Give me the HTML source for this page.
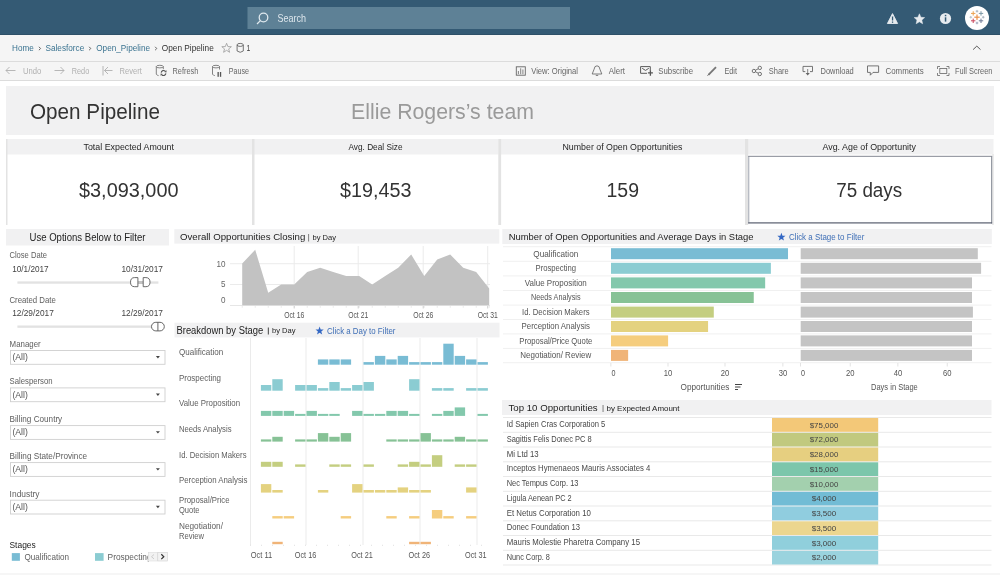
<!DOCTYPE html><html><head><meta charset="utf-8"><style>html,body{margin:0;padding:0;background:#fff;overflow:hidden}svg{display:block;will-change:transform}text{font-family:"Liberation Sans",sans-serif}</style></head><body>
<svg width="1000" height="575" viewBox="0 0 1000 575">
<rect x="0.00" y="0.00" width="1000.00" height="35.00" fill="#345a74" />
<rect x="0.00" y="34.00" width="1000.00" height="1.00" fill="#2e5068" />
<rect x="247.50" y="7.00" width="322.50" height="22.00" fill="#5e8196" />
<circle cx="263.5" cy="17.5" r="4.3" fill="none" stroke="#dfe8ee" stroke-width="1.3"/>
<line x1="260.4" y1="20.6" x2="257" y2="24" stroke="#dfe8ee" stroke-width="1.3"/>
<text x="277.50" y="21.60" font-size="10.43" textLength="28.50" lengthAdjust="spacingAndGlyphs" fill="#dde6ec" font-weight="normal" >Search</text>
<path d="M892.5 13.6 L897.6 23.5 L887.4 23.5 Z" fill="#e6ebef" stroke="#e6ebef" stroke-width="0.9" stroke-linejoin="round"/>
<rect x="891.9" y="16.5" width="1.3" height="4" fill="#345a74"/><rect x="891.9" y="21.5" width="1.3" height="1.3" fill="#345a74"/>
<polygon points="919.40,13.80 920.90,17.24 924.63,17.60 921.83,20.09 922.63,23.75 919.40,21.85 916.17,23.75 916.97,20.09 914.17,17.60 917.90,17.24" fill="#e6ebef" stroke="#e6ebef" stroke-width="0.5" stroke-linejoin="round"/>
<circle cx="945.5" cy="18.5" r="5.6" fill="#e6ebef"/><rect x="944.8" y="17.3" width="1.5" height="4.3" fill="#345a74"/><rect x="944.8" y="14.8" width="1.5" height="1.5" fill="#345a74"/>
<circle cx="977" cy="18" r="12" fill="#ffffff"/>
<rect x="974.30" y="16.60" width="5.40" height="1.20" fill="#e9914a"/><rect x="976.40" y="14.50" width="1.20" height="5.40" fill="#e9914a"/>
<rect x="971.00" y="12.90" width="4.40" height="1.00" fill="#eba24f"/><rect x="972.70" y="11.20" width="1.00" height="4.40" fill="#eba24f"/>
<rect x="978.80" y="12.90" width="4.40" height="1.00" fill="#7d97a6"/><rect x="980.50" y="11.20" width="1.00" height="4.40" fill="#7d97a6"/>
<rect x="971.00" y="20.30" width="4.40" height="1.00" fill="#c9455a"/><rect x="972.70" y="18.60" width="1.00" height="4.40" fill="#c9455a"/>
<rect x="978.80" y="20.30" width="4.40" height="1.00" fill="#6d7894"/><rect x="980.50" y="18.60" width="1.00" height="4.40" fill="#6d7894"/>
<rect x="975.70" y="10.75" width="2.60" height="0.90" fill="#a5b0ba"/><rect x="976.55" y="9.90" width="0.90" height="2.60" fill="#a5b0ba"/>
<rect x="975.70" y="22.55" width="2.60" height="0.90" fill="#939bb3"/><rect x="976.55" y="21.70" width="0.90" height="2.60" fill="#939bb3"/>
<rect x="969.50" y="16.75" width="2.60" height="0.90" fill="#b3bdc6"/><rect x="970.35" y="15.90" width="0.90" height="2.60" fill="#b3bdc6"/>
<rect x="981.90" y="16.75" width="2.60" height="0.90" fill="#a6afbb"/><rect x="982.75" y="15.90" width="0.90" height="2.60" fill="#a6afbb"/>
<rect x="0.00" y="35.00" width="1000.00" height="27.00" fill="#f5f5f5" />
<rect x="0.00" y="61.00" width="1000.00" height="1.00" fill="#dcdcdc" />
<text x="12.00" y="51.00" font-size="9.71" textLength="21.75" lengthAdjust="spacingAndGlyphs" fill="#3a7390" font-weight="normal" >Home</text>
<path d="M38.9 46.8 L40.6 48.5 L38.9 50.2" fill="none" stroke="#666" stroke-width="1"/>
<text x="45.50" y="51.00" font-size="9.71" textLength="38.75" lengthAdjust="spacingAndGlyphs" fill="#3a7390" font-weight="normal" >Salesforce</text>
<path d="M89.1 46.8 L90.8 48.5 L89.1 50.2" fill="none" stroke="#666" stroke-width="1"/>
<text x="96.25" y="51.00" font-size="9.71" textLength="53.75" lengthAdjust="spacingAndGlyphs" fill="#3a7390" font-weight="normal" >Open_Pipeline</text>
<path d="M155.1 46.8 L156.8 48.5 L155.1 50.2" fill="none" stroke="#666" stroke-width="1"/>
<text x="161.75" y="51.00" font-size="9.71" textLength="52.00" lengthAdjust="spacingAndGlyphs" fill="#333" font-weight="normal" >Open Pipeline</text>
<path d="M226.6 43.3 L227.9 46.6 L231.4 46.7 L228.7 48.9 L229.6 52.3 L226.6 50.3 L223.6 52.3 L224.5 48.9 L221.8 46.7 L225.3 46.6 Z" fill="none" stroke="#9a9a9a" stroke-width="0.8"/>
<ellipse cx="240.2" cy="44.9" rx="3.1" ry="1.5" fill="none" stroke="#666" stroke-width="0.9"/><path d="M237.1 44.9 V51 Q240.2 53.6 243.3 51 V44.9" fill="none" stroke="#666" stroke-width="0.9"/>
<text x="246.40" y="51.20" font-size="8.41" textLength="3.80" lengthAdjust="spacingAndGlyphs" fill="#444" font-weight="normal" >1</text>
<path d="M973.1 49.6 L976.8 46.1 L980.5 49.6" fill="none" stroke="#5a5a5a" stroke-width="1"/>
<rect x="0.00" y="62.00" width="1000.00" height="18.00" fill="#f5f5f5" />
<rect x="0.00" y="80.00" width="1000.00" height="1.00" fill="#dcdcdc" />
<path d="M15.5 70.5 H6 M9.5 67 L6 70.5 L9.5 74" fill="none" stroke="#b0b0b0" stroke-width="0.9"/>
<text x="23.00" y="74.30" font-size="9.86" textLength="18.25" lengthAdjust="spacingAndGlyphs" fill="#b0b0b0" font-weight="normal" >Undo</text>
<path d="M54.5 70.5 H64 M60.5 67 L64 70.5 L60.5 74" fill="none" stroke="#b0b0b0" stroke-width="0.9"/>
<text x="71.75" y="74.30" font-size="9.86" textLength="17.50" lengthAdjust="spacingAndGlyphs" fill="#b0b0b0" font-weight="normal" >Redo</text>
<path d="M103 66 V75.5 M112.5 70.5 H104.5 M108 67 L104.5 70.5 L108 74" fill="none" stroke="#b0b0b0" stroke-width="0.9"/>
<text x="119.50" y="74.30" font-size="9.86" textLength="22.25" lengthAdjust="spacingAndGlyphs" fill="#b0b0b0" font-weight="normal" >Revert</text>
<ellipse cx="159.8" cy="66.6" rx="3.5" ry="1.3" fill="none" stroke="#666" stroke-width="0.8"/><path d="M156.3 66.6 V74.2 Q157 75.4 158.6 75.6 M163.3 66.6 V69.2" fill="none" stroke="#666" stroke-width="0.8"/>
<path d="M161.2 72.6 A2.4 2.4 0 0 1 165.3 71.2 M165.9 73.4 A2.4 2.4 0 0 1 161.8 74.8" fill="none" stroke="#555" stroke-width="1.1"/><path d="M166.6 70.2 L166.4 72.6 L164.2 71.9 Z M160.5 75.8 L160.7 73.4 L162.9 74.1 Z" fill="#555"/>
<text x="172.50" y="74.30" font-size="9.86" textLength="25.75" lengthAdjust="spacingAndGlyphs" fill="#666" font-weight="normal" >Refresh</text>
<ellipse cx="216" cy="66.6" rx="3.5" ry="1.3" fill="none" stroke="#666" stroke-width="0.8"/><path d="M212.5 66.6 V74.2 Q213.2 75.4 214.8 75.6 M219.5 66.6 V69.5" fill="none" stroke="#666" stroke-width="0.8"/><rect x="217.5" y="72" width="1.3" height="4.8" fill="#555"/><rect x="219.9" y="72" width="1.3" height="4.8" fill="#555"/>
<text x="228.75" y="74.30" font-size="9.86" textLength="20.25" lengthAdjust="spacingAndGlyphs" fill="#666" font-weight="normal" >Pause</text>
<rect x="516.3" y="66.8" width="9" height="8.4" fill="none" stroke="#666" stroke-width="0.9"/><path d="M518.4 74.2 V71 M520.7 74.2 V68.3 M522.9 74.2 V69.5" stroke="#666" stroke-width="0.8"/>
<text x="531.25" y="74.30" font-size="9.86" textLength="46.75" lengthAdjust="spacingAndGlyphs" fill="#666" font-weight="normal" >View: Original</text>
<path d="M597 65.8 Q599.6 65.8 599.9 69.2 L601.8 74 H592.2 L594.1 69.2 Q594.4 65.8 597 65.8 Z M595.8 75.4 H598.2" fill="none" stroke="#666" stroke-width="0.85"/>
<text x="608.75" y="74.30" font-size="9.86" textLength="16.25" lengthAdjust="spacingAndGlyphs" fill="#666" font-weight="normal" >Alert</text>
<path d="M647 73.3 H640.6 V66.6 H650.3 V70.5 M642.2 68.3 L645.5 70.4 L648.8 68.3" fill="none" stroke="#5a5a5a" stroke-width="1"/><path d="M650.4 70.3 V75.8 M647.9 72.9 H652.9" stroke="#555" stroke-width="1.3"/>
<text x="658.25" y="74.30" font-size="9.86" textLength="34.75" lengthAdjust="spacingAndGlyphs" fill="#666" font-weight="normal" >Subscribe</text>
<path d="M708.4 74.8 L716 67.2" stroke="#777" stroke-width="1.9"/><path d="M707.6 75.6 L708.6 74.6" stroke="#555" stroke-width="1"/>
<text x="724.50" y="74.30" font-size="9.86" textLength="12.50" lengthAdjust="spacingAndGlyphs" fill="#666" font-weight="normal" >Edit</text>
<circle cx="753.9" cy="71" r="1.7" fill="none" stroke="#666" stroke-width="0.9"/><circle cx="759.8" cy="67.9" r="1.7" fill="none" stroke="#666" stroke-width="0.9"/><circle cx="759.8" cy="74" r="1.7" fill="none" stroke="#666" stroke-width="0.9"/><path d="M755.5 70.2 L758.2 68.8 M755.5 71.8 L758.2 73.2" stroke="#666" stroke-width="0.9"/>
<text x="768.75" y="74.30" font-size="9.86" textLength="20.00" lengthAdjust="spacingAndGlyphs" fill="#666" font-weight="normal" >Share</text>
<path d="M805.3 71.6 H803 V66.4 H812.5 V71.6 H810" fill="none" stroke="#666" stroke-width="0.9"/><path d="M807.7 69 V73.5" stroke="#666" stroke-width="0.8"/><path d="M805.6 73 H809.8 L807.7 75.6 Z" fill="#666"/>
<text x="820.50" y="74.30" font-size="9.86" textLength="33.25" lengthAdjust="spacingAndGlyphs" fill="#666" font-weight="normal" >Download</text>
<path d="M867.5 65.9 H878.6 V72.4 H873 L870.3 75.2 V72.4 H867.5 Z" fill="none" stroke="#666" stroke-width="0.9"/>
<text x="885.50" y="74.30" font-size="9.86" textLength="38.25" lengthAdjust="spacingAndGlyphs" fill="#666" font-weight="normal" >Comments</text>
<path d="M937.5 69 V66.5 H940 M946.5 66.5 H949 V69 M949 73 V75.5 H946.5 M940 75.5 H937.5 V73" fill="none" stroke="#666" stroke-width="0.8"/><rect x="939.8" y="68.5" width="7" height="5" fill="none" stroke="#666" stroke-width="0.8"/>
<text x="955.00" y="74.30" font-size="9.86" textLength="37.50" lengthAdjust="spacingAndGlyphs" fill="#666" font-weight="normal" >Full Screen</text>
<rect x="6.00" y="86.00" width="988.00" height="49.00" fill="#f1f1f2" />
<text x="30.00" y="119.00" font-size="21.16" textLength="130.00" lengthAdjust="spacingAndGlyphs" fill="#333" font-weight="normal" >Open Pipeline</text>
<text x="351.00" y="119.00" font-size="21.16" textLength="183.00" lengthAdjust="spacingAndGlyphs" fill="#9a9a9a" font-weight="normal" >Ellie Rogers’s team</text>
<rect x="6.00" y="139.00" width="246.50" height="15.50" fill="#f1f1f2" />
<rect x="253.50" y="139.00" width="245.00" height="15.50" fill="#f1f1f2" />
<rect x="500.50" y="139.00" width="244.50" height="15.50" fill="#f1f1f2" />
<rect x="748.00" y="139.00" width="245.50" height="15.50" fill="#f1f1f2" />
<rect x="6.00" y="139.00" width="1.50" height="86.00" fill="#e3e3e3" />
<rect x="252.00" y="139.00" width="2.50" height="86.00" fill="#e3e3e3" />
<rect x="498.30" y="139.00" width="2.80" height="86.00" fill="#e3e3e3" />
<rect x="745.00" y="139.00" width="3.20" height="86.00" fill="#e3e3e3" />
<text x="83.50" y="149.90" font-size="9.42" textLength="90.50" lengthAdjust="spacingAndGlyphs" fill="#262626" font-weight="normal" >Total Expected Amount</text>
<text x="348.50" y="149.90" font-size="9.42" textLength="54.00" lengthAdjust="spacingAndGlyphs" fill="#262626" font-weight="normal" >Avg. Deal Size</text>
<text x="562.50" y="149.90" font-size="9.42" textLength="120.00" lengthAdjust="spacingAndGlyphs" fill="#262626" font-weight="normal" >Number of Open Opportunities</text>
<text x="822.50" y="149.90" font-size="9.42" textLength="93.50" lengthAdjust="spacingAndGlyphs" fill="#262626" font-weight="normal" >Avg. Age of Opportunity</text>
<text x="79.00" y="197.20" font-size="19.57" textLength="99.50" lengthAdjust="spacingAndGlyphs" fill="#333" font-weight="normal" >$3,093,000</text>
<text x="340.00" y="197.20" font-size="19.57" textLength="71.50" lengthAdjust="spacingAndGlyphs" fill="#333" font-weight="normal" >$19,453</text>
<text x="606.50" y="197.20" font-size="19.57" textLength="32.50" lengthAdjust="spacingAndGlyphs" fill="#333" font-weight="normal" >159</text>
<text x="836.20" y="197.20" font-size="19.57" textLength="66.00" lengthAdjust="spacingAndGlyphs" fill="#333" font-weight="normal" >75 days</text>
<rect x="992.00" y="154.00" width="2.00" height="71.00" fill="#ececec" />
<rect x="748.20" y="156.00" width="1.10" height="67.50" fill="#a9adb7" />
<rect x="748.20" y="155.80" width="243.90" height="1.10" fill="#8f939d" />
<rect x="991.10" y="156.00" width="1.10" height="67.50" fill="#8a8f9a" />
<rect x="748.20" y="222.30" width="243.90" height="1.20" fill="#595e6e" />
<rect x="6.00" y="229.00" width="163.00" height="16.50" fill="#f1f1f2" />
<text x="29.50" y="241.30" font-size="10.14" textLength="115.90" lengthAdjust="spacingAndGlyphs" fill="#222" font-weight="normal" >Use Options Below to Filter</text>
<text x="9.40" y="258.10" font-size="8.55" textLength="37.60" lengthAdjust="spacingAndGlyphs" fill="#606060" font-weight="normal" >Close Date</text>
<text x="12.20" y="272.00" font-size="8.55" textLength="36.50" lengthAdjust="spacingAndGlyphs" fill="#444" font-weight="normal" >10/1/2017</text>
<text x="121.40" y="272.00" font-size="8.55" textLength="41.60" lengthAdjust="spacingAndGlyphs" fill="#444" font-weight="normal" >10/31/2017</text>
<rect x="17.40" y="281.40" width="141.00" height="2.30" fill="#e2e2e2" />
<rect x="137.50" y="281.00" width="6.00" height="3.00" fill="#c4c4c4" />
<path d="M137.9 277.6 H134.6 Q130.5 277.6 130.5 282.2 Q130.5 286.7 134.6 286.7 H137.9 Z" fill="#fff" stroke="#5a5a5a" stroke-width="0.9"/>
<path d="M143.2 277.6 H145.9 Q150.0 277.6 150.0 282.2 Q150.0 286.7 145.9 286.7 H143.2 Z" fill="#fff" stroke="#5a5a5a" stroke-width="0.9"/>
<text x="9.40" y="302.50" font-size="8.55" textLength="46.50" lengthAdjust="spacingAndGlyphs" fill="#606060" font-weight="normal" >Created Date</text>
<text x="12.20" y="316.30" font-size="8.55" textLength="41.60" lengthAdjust="spacingAndGlyphs" fill="#444" font-weight="normal" >12/29/2017</text>
<text x="121.40" y="316.30" font-size="8.55" textLength="41.60" lengthAdjust="spacingAndGlyphs" fill="#444" font-weight="normal" >12/29/2017</text>
<rect x="17.40" y="325.50" width="141.00" height="2.30" fill="#e2e2e2" />
<rect x="151.5" y="322.3" width="12.8" height="8.6" rx="4.3" fill="#fff" stroke="#555" stroke-width="0.9"/><path d="M157.9 322.3 V330.9" stroke="#555" stroke-width="0.9"/>
<text x="9.60" y="346.90" font-size="8.55" textLength="31.10" lengthAdjust="spacingAndGlyphs" fill="#606060" font-weight="normal" >Manager</text>
<rect x="10.5" y="350.50" width="154.5" height="13.8" fill="#fff" stroke="#cfcfcf" stroke-width="0.9"/>
<text x="12.40" y="360.30" font-size="8.55" textLength="15.40" lengthAdjust="spacingAndGlyphs" fill="#555" font-weight="normal" >(All)</text>
<path d="M155.9 356.10 H159.9 L157.9 358.50 Z" fill="#444"/>
<text x="9.60" y="384.30" font-size="8.55" textLength="43.00" lengthAdjust="spacingAndGlyphs" fill="#606060" font-weight="normal" >Salesperson</text>
<rect x="10.5" y="387.90" width="154.5" height="13.8" fill="#fff" stroke="#cfcfcf" stroke-width="0.9"/>
<text x="12.40" y="397.70" font-size="8.55" textLength="15.40" lengthAdjust="spacingAndGlyphs" fill="#555" font-weight="normal" >(All)</text>
<path d="M155.9 393.50 H159.9 L157.9 395.90 Z" fill="#444"/>
<text x="9.60" y="422.00" font-size="8.55" textLength="52.60" lengthAdjust="spacingAndGlyphs" fill="#606060" font-weight="normal" >Billing Country</text>
<rect x="10.5" y="425.60" width="154.5" height="13.8" fill="#fff" stroke="#cfcfcf" stroke-width="0.9"/>
<text x="12.40" y="435.40" font-size="8.55" textLength="15.40" lengthAdjust="spacingAndGlyphs" fill="#555" font-weight="normal" >(All)</text>
<path d="M155.9 431.20 H159.9 L157.9 433.60 Z" fill="#444"/>
<text x="9.60" y="459.00" font-size="8.55" textLength="77.50" lengthAdjust="spacingAndGlyphs" fill="#606060" font-weight="normal" >Billing State/Province</text>
<rect x="10.5" y="462.60" width="154.5" height="13.8" fill="#fff" stroke="#cfcfcf" stroke-width="0.9"/>
<text x="12.40" y="472.40" font-size="8.55" textLength="15.40" lengthAdjust="spacingAndGlyphs" fill="#555" font-weight="normal" >(All)</text>
<path d="M155.9 468.20 H159.9 L157.9 470.60 Z" fill="#444"/>
<text x="9.60" y="496.60" font-size="8.55" textLength="30.00" lengthAdjust="spacingAndGlyphs" fill="#606060" font-weight="normal" >Industry</text>
<rect x="10.5" y="500.20" width="154.5" height="13.8" fill="#fff" stroke="#cfcfcf" stroke-width="0.9"/>
<text x="12.40" y="510.00" font-size="8.55" textLength="15.40" lengthAdjust="spacingAndGlyphs" fill="#555" font-weight="normal" >(All)</text>
<path d="M155.9 505.80 H159.9 L157.9 508.20 Z" fill="#444"/>
<text x="9.50" y="547.90" font-size="9.86" textLength="26.20" lengthAdjust="spacingAndGlyphs" fill="#222" font-weight="normal" >Stages</text>
<rect x="11.80" y="553.10" width="8.10" height="7.70" fill="#79bcd4" />
<text x="24.40" y="559.90" font-size="8.55" textLength="44.60" lengthAdjust="spacingAndGlyphs" fill="#606060" font-weight="normal" >Qualification</text>
<rect x="95.00" y="553.10" width="8.60" height="7.70" fill="#8bccd2" />
<svg x="107.6" y="545" width="40.5" height="20" overflow="hidden">
<text x="0.00" y="14.90" font-size="8.55" textLength="44.00" lengthAdjust="spacingAndGlyphs" fill="#606060" font-weight="normal" >Prospecting</text>
</svg>
<rect x="148.3" y="552.4" width="9" height="8.6" fill="#f2f2f2" stroke="#dcdcdc" stroke-width="0.6"/><rect x="157.8" y="552.4" width="9.5" height="8.6" fill="#f2f2f2" stroke="#cfcfcf" stroke-width="0.6"/>
<path d="M154 554.5 L151.5 556.7 L154 558.9" fill="none" stroke="#c8c8c8" stroke-width="0.9"/><path d="M161.3 554.3 L163.8 556.7 L161.3 559.1" fill="none" stroke="#333" stroke-width="1.2"/>
<rect x="174.30" y="229.20" width="325.00" height="14.40" fill="#f1f1f2" />
<text x="180.00" y="240.10" font-size="9.57" textLength="125.30" lengthAdjust="spacingAndGlyphs" fill="#222" font-weight="normal" >Overall Opportunities Closing</text>
<rect x="308.00" y="234.00" width="1.10" height="7.50" fill="#8a8a8a" />
<text x="312.50" y="239.70" font-size="7.54" textLength="23.50" lengthAdjust="spacingAndGlyphs" fill="#222" font-weight="normal" >by Day</text>
<rect x="230.00" y="263.20" width="260.00" height="1.00" fill="#ebebeb" />
<rect x="230.00" y="284.00" width="260.00" height="1.00" fill="#ebebeb" />
<rect x="230.00" y="305.00" width="260.00" height="1.00" fill="#e6e6e6" />
<rect x="293.70" y="246.00" width="1.00" height="59.00" fill="#ebebeb" />
<rect x="357.70" y="246.00" width="1.00" height="59.00" fill="#ebebeb" />
<rect x="422.70" y="246.00" width="1.00" height="59.00" fill="#ebebeb" />
<rect x="487.20" y="246.00" width="1.00" height="59.00" fill="#ebebeb" />
<polygon points="242.20,305.3 242.20,263.60 255.20,249.84 268.20,292.79 281.20,284.45 294.20,284.45 307.20,271.94 320.20,267.77 333.20,271.94 346.20,276.11 359.20,276.11 372.20,284.45 385.20,276.11 398.20,267.77 411.20,254.43 424.20,276.11 437.20,259.43 450.20,254.43 463.20,267.77 476.20,271.94 489.20,288.62 489.20,305.3" fill="#c2c2c2"/>
<text x="216.50" y="266.60" font-size="8.55" textLength="9.00" lengthAdjust="spacingAndGlyphs" fill="#666" font-weight="normal" >10</text>
<text x="221.00" y="287.40" font-size="8.55" textLength="4.50" lengthAdjust="spacingAndGlyphs" fill="#666" font-weight="normal" >5</text>
<text x="221.00" y="303.40" font-size="8.55" textLength="4.50" lengthAdjust="spacingAndGlyphs" fill="#666" font-weight="normal" >0</text>
<rect x="241.80" y="306.00" width="0.80" height="1.80" fill="#e6e6e6" />
<rect x="254.80" y="306.00" width="0.80" height="1.80" fill="#e6e6e6" />
<rect x="267.80" y="306.00" width="0.80" height="1.80" fill="#e6e6e6" />
<rect x="280.80" y="306.00" width="0.80" height="1.80" fill="#e6e6e6" />
<rect x="293.80" y="306.00" width="0.80" height="1.80" fill="#e6e6e6" />
<rect x="306.80" y="306.00" width="0.80" height="1.80" fill="#e6e6e6" />
<rect x="319.80" y="306.00" width="0.80" height="1.80" fill="#e6e6e6" />
<rect x="332.80" y="306.00" width="0.80" height="1.80" fill="#e6e6e6" />
<rect x="345.80" y="306.00" width="0.80" height="1.80" fill="#e6e6e6" />
<rect x="358.80" y="306.00" width="0.80" height="1.80" fill="#e6e6e6" />
<rect x="371.80" y="306.00" width="0.80" height="1.80" fill="#e6e6e6" />
<rect x="384.80" y="306.00" width="0.80" height="1.80" fill="#e6e6e6" />
<rect x="397.80" y="306.00" width="0.80" height="1.80" fill="#e6e6e6" />
<rect x="410.80" y="306.00" width="0.80" height="1.80" fill="#e6e6e6" />
<rect x="423.80" y="306.00" width="0.80" height="1.80" fill="#e6e6e6" />
<rect x="436.80" y="306.00" width="0.80" height="1.80" fill="#e6e6e6" />
<rect x="449.80" y="306.00" width="0.80" height="1.80" fill="#e6e6e6" />
<rect x="462.80" y="306.00" width="0.80" height="1.80" fill="#e6e6e6" />
<rect x="475.80" y="306.00" width="0.80" height="1.80" fill="#e6e6e6" />
<rect x="488.80" y="306.00" width="0.80" height="1.80" fill="#e6e6e6" />
<rect x="293.70" y="306.00" width="1.00" height="2.50" fill="#d0d0d0" />
<text x="284.20" y="317.80" font-size="8.41" textLength="20.00" lengthAdjust="spacingAndGlyphs" fill="#555" font-weight="normal" >Oct 16</text>
<rect x="357.70" y="306.00" width="1.00" height="2.50" fill="#d0d0d0" />
<text x="348.20" y="317.80" font-size="8.41" textLength="20.00" lengthAdjust="spacingAndGlyphs" fill="#555" font-weight="normal" >Oct 21</text>
<rect x="422.70" y="306.00" width="1.00" height="2.50" fill="#d0d0d0" />
<text x="413.20" y="317.80" font-size="8.41" textLength="20.00" lengthAdjust="spacingAndGlyphs" fill="#555" font-weight="normal" >Oct 26</text>
<rect x="487.20" y="306.00" width="1.00" height="2.50" fill="#d0d0d0" />
<text x="477.70" y="317.80" font-size="8.41" textLength="20.00" lengthAdjust="spacingAndGlyphs" fill="#555" font-weight="normal" >Oct 31</text>
<rect x="174.50" y="322.70" width="325.00" height="14.70" fill="#f1f1f2" />
<text x="176.50" y="333.80" font-size="10.00" textLength="86.70" lengthAdjust="spacingAndGlyphs" fill="#222" font-weight="normal" >Breakdown by Stage</text>
<rect x="267.80" y="327.50" width="1.10" height="7.00" fill="#555" />
<text x="272.00" y="333.20" font-size="7.39" textLength="23.50" lengthAdjust="spacingAndGlyphs" fill="#222" font-weight="normal" >by Day</text>
<path d="M319.6 326.6 L320.7 329.5 L323.7 329.6 L321.3 331.5 L322.2 334.4 L319.6 332.7 L317 334.4 L317.9 331.5 L315.5 329.6 L318.5 329.5 Z" fill="#3468c4"/>
<text x="327.00" y="333.60" font-size="9.13" textLength="68.40" lengthAdjust="spacingAndGlyphs" fill="#3f6fb6" font-weight="normal" >Click a Day to Filter</text>
<rect x="250.00" y="338.00" width="1.00" height="207.00" fill="#ebebeb" />
<rect x="305.50" y="338.00" width="1.00" height="207.00" fill="#ebebeb" />
<rect x="362.50" y="338.00" width="1.00" height="207.00" fill="#ebebeb" />
<rect x="419.50" y="338.00" width="1.00" height="207.00" fill="#ebebeb" />
<rect x="476.50" y="338.00" width="1.00" height="207.00" fill="#ebebeb" />
<line x1="250" y1="545.3" x2="490" y2="545.3" stroke="#d8d8d8" stroke-width="0.8" stroke-dasharray="1 10"/>
<rect x="317.90" y="359.40" width="10.40" height="5.30" fill="#79bcd4" />
<rect x="329.30" y="359.40" width="10.40" height="5.30" fill="#79bcd4" />
<rect x="340.70" y="359.40" width="10.40" height="5.30" fill="#79bcd4" />
<rect x="363.50" y="362.10" width="10.40" height="2.60" fill="#79bcd4" />
<rect x="374.90" y="355.90" width="10.40" height="8.80" fill="#79bcd4" />
<rect x="386.30" y="359.40" width="10.40" height="5.30" fill="#79bcd4" />
<rect x="397.70" y="355.90" width="10.40" height="8.80" fill="#79bcd4" />
<rect x="409.10" y="362.10" width="10.40" height="2.60" fill="#79bcd4" />
<rect x="420.50" y="362.10" width="10.40" height="2.60" fill="#79bcd4" />
<rect x="431.90" y="362.10" width="10.40" height="2.60" fill="#79bcd4" />
<rect x="443.30" y="343.70" width="10.40" height="21.00" fill="#79bcd4" />
<rect x="454.70" y="355.90" width="10.40" height="8.80" fill="#79bcd4" />
<rect x="466.10" y="359.40" width="10.40" height="5.30" fill="#79bcd4" />
<rect x="477.50" y="362.10" width="10.40" height="2.60" fill="#79bcd4" />
<rect x="260.90" y="385.00" width="10.40" height="5.70" fill="#8bccd2" />
<rect x="272.30" y="379.20" width="10.40" height="11.50" fill="#8bccd2" />
<rect x="295.10" y="385.00" width="10.40" height="5.70" fill="#8bccd2" />
<rect x="306.50" y="385.00" width="10.40" height="5.70" fill="#8bccd2" />
<rect x="317.90" y="388.10" width="10.40" height="2.60" fill="#8bccd2" />
<rect x="329.30" y="382.00" width="10.40" height="8.70" fill="#8bccd2" />
<rect x="340.70" y="388.10" width="10.40" height="2.60" fill="#8bccd2" />
<rect x="352.10" y="385.00" width="10.40" height="5.70" fill="#8bccd2" />
<rect x="363.50" y="382.00" width="10.40" height="8.70" fill="#8bccd2" />
<rect x="409.10" y="379.20" width="10.40" height="11.50" fill="#8bccd2" />
<rect x="431.90" y="388.10" width="10.40" height="2.60" fill="#8bccd2" />
<rect x="443.30" y="388.10" width="10.40" height="2.60" fill="#8bccd2" />
<rect x="466.10" y="388.10" width="10.40" height="2.60" fill="#8bccd2" />
<rect x="477.50" y="388.10" width="10.40" height="2.60" fill="#8bccd2" />
<rect x="260.90" y="410.90" width="10.40" height="5.00" fill="#83c8ac" />
<rect x="272.30" y="410.90" width="10.40" height="5.00" fill="#83c8ac" />
<rect x="283.70" y="410.90" width="10.40" height="5.00" fill="#83c8ac" />
<rect x="295.10" y="413.90" width="10.40" height="2.00" fill="#83c8ac" />
<rect x="306.50" y="410.90" width="10.40" height="5.00" fill="#83c8ac" />
<rect x="317.90" y="413.90" width="10.40" height="2.00" fill="#83c8ac" />
<rect x="329.30" y="413.90" width="10.40" height="2.00" fill="#83c8ac" />
<rect x="352.10" y="410.90" width="10.40" height="5.00" fill="#83c8ac" />
<rect x="363.50" y="413.90" width="10.40" height="2.00" fill="#83c8ac" />
<rect x="374.90" y="413.90" width="10.40" height="2.00" fill="#83c8ac" />
<rect x="386.30" y="410.90" width="10.40" height="5.00" fill="#83c8ac" />
<rect x="397.70" y="410.90" width="10.40" height="5.00" fill="#83c8ac" />
<rect x="409.10" y="413.90" width="10.40" height="2.00" fill="#83c8ac" />
<rect x="431.90" y="413.90" width="10.40" height="2.00" fill="#83c8ac" />
<rect x="443.30" y="410.90" width="10.40" height="5.00" fill="#83c8ac" />
<rect x="454.70" y="407.40" width="10.40" height="8.50" fill="#83c8ac" />
<rect x="477.50" y="413.90" width="10.40" height="2.00" fill="#83c8ac" />
<rect x="260.90" y="439.40" width="10.40" height="2.20" fill="#87c296" />
<rect x="272.30" y="436.80" width="10.40" height="4.80" fill="#87c296" />
<rect x="295.10" y="439.40" width="10.40" height="2.20" fill="#87c296" />
<rect x="306.50" y="439.40" width="10.40" height="2.20" fill="#87c296" />
<rect x="317.90" y="433.10" width="10.40" height="8.50" fill="#87c296" />
<rect x="329.30" y="436.80" width="10.40" height="4.80" fill="#87c296" />
<rect x="340.70" y="433.10" width="10.40" height="8.50" fill="#87c296" />
<rect x="386.30" y="439.40" width="10.40" height="2.20" fill="#87c296" />
<rect x="397.70" y="439.40" width="10.40" height="2.20" fill="#87c296" />
<rect x="409.10" y="439.40" width="10.40" height="2.20" fill="#87c296" />
<rect x="420.50" y="433.10" width="10.40" height="8.50" fill="#87c296" />
<rect x="431.90" y="439.40" width="10.40" height="2.20" fill="#87c296" />
<rect x="443.30" y="439.40" width="10.40" height="2.20" fill="#87c296" />
<rect x="454.70" y="436.80" width="10.40" height="4.80" fill="#87c296" />
<rect x="466.10" y="439.40" width="10.40" height="2.20" fill="#87c296" />
<rect x="477.50" y="439.40" width="10.40" height="2.20" fill="#87c296" />
<rect x="260.90" y="461.80" width="10.40" height="5.00" fill="#c4ce80" />
<rect x="272.30" y="461.80" width="10.40" height="5.00" fill="#c4ce80" />
<rect x="295.10" y="464.40" width="10.40" height="2.40" fill="#c4ce80" />
<rect x="329.30" y="464.40" width="10.40" height="2.40" fill="#c4ce80" />
<rect x="340.70" y="464.40" width="10.40" height="2.40" fill="#c4ce80" />
<rect x="363.50" y="464.40" width="10.40" height="2.40" fill="#c4ce80" />
<rect x="397.70" y="464.40" width="10.40" height="2.40" fill="#c4ce80" />
<rect x="409.10" y="461.80" width="10.40" height="5.00" fill="#c4ce80" />
<rect x="420.50" y="464.40" width="10.40" height="2.40" fill="#c4ce80" />
<rect x="431.90" y="455.20" width="10.40" height="11.60" fill="#c4ce80" />
<rect x="454.70" y="464.40" width="10.40" height="2.40" fill="#c4ce80" />
<rect x="466.10" y="464.40" width="10.40" height="2.40" fill="#c4ce80" />
<rect x="260.90" y="484.10" width="10.40" height="8.50" fill="#e4d280" />
<rect x="272.30" y="490.00" width="10.40" height="2.60" fill="#e4d280" />
<rect x="317.90" y="490.00" width="10.40" height="2.60" fill="#e4d280" />
<rect x="352.10" y="484.10" width="10.40" height="8.50" fill="#e4d280" />
<rect x="363.50" y="490.00" width="10.40" height="2.60" fill="#e4d280" />
<rect x="374.90" y="490.00" width="10.40" height="2.60" fill="#e4d280" />
<rect x="386.30" y="490.00" width="10.40" height="2.60" fill="#e4d280" />
<rect x="397.70" y="487.40" width="10.40" height="5.20" fill="#e4d280" />
<rect x="409.10" y="490.00" width="10.40" height="2.60" fill="#e4d280" />
<rect x="420.50" y="490.00" width="10.40" height="2.60" fill="#e4d280" />
<rect x="466.10" y="487.40" width="10.40" height="5.20" fill="#e4d280" />
<rect x="272.30" y="516.10" width="10.40" height="2.40" fill="#f5cd7e" />
<rect x="283.70" y="516.10" width="10.40" height="2.40" fill="#f5cd7e" />
<rect x="340.70" y="516.10" width="10.40" height="2.40" fill="#f5cd7e" />
<rect x="386.30" y="516.10" width="10.40" height="2.40" fill="#f5cd7e" />
<rect x="409.10" y="516.10" width="10.40" height="2.40" fill="#f5cd7e" />
<rect x="431.90" y="510.00" width="10.40" height="8.50" fill="#f5cd7e" />
<rect x="443.30" y="516.10" width="10.40" height="2.40" fill="#f5cd7e" />
<rect x="466.10" y="516.10" width="10.40" height="2.40" fill="#f5cd7e" />
<rect x="272.30" y="541.80" width="10.40" height="2.40" fill="#f0b478" />
<rect x="409.10" y="541.80" width="10.40" height="2.40" fill="#f0b478" />
<rect x="420.50" y="541.80" width="10.40" height="2.40" fill="#f0b478" />
<text x="179.00" y="355.00" font-size="8.55" textLength="44.20" lengthAdjust="spacingAndGlyphs" fill="#606060" font-weight="normal" >Qualification</text>
<text x="179.00" y="380.70" font-size="8.55" textLength="42.00" lengthAdjust="spacingAndGlyphs" fill="#606060" font-weight="normal" >Prospecting</text>
<text x="179.00" y="406.30" font-size="8.55" textLength="61.00" lengthAdjust="spacingAndGlyphs" fill="#606060" font-weight="normal" >Value Proposition</text>
<text x="179.00" y="432.00" font-size="8.55" textLength="52.50" lengthAdjust="spacingAndGlyphs" fill="#606060" font-weight="normal" >Needs Analysis</text>
<text x="179.00" y="457.70" font-size="8.55" textLength="67.50" lengthAdjust="spacingAndGlyphs" fill="#606060" font-weight="normal" >Id. Decision Makers</text>
<text x="179.00" y="483.30" font-size="8.55" textLength="68.50" lengthAdjust="spacingAndGlyphs" fill="#606060" font-weight="normal" >Perception Analysis</text>
<text x="179.00" y="503.00" font-size="8.55" textLength="50.50" lengthAdjust="spacingAndGlyphs" fill="#606060" font-weight="normal" >Proposal/Price</text>
<text x="179.00" y="513.40" font-size="8.55" textLength="20.50" lengthAdjust="spacingAndGlyphs" fill="#606060" font-weight="normal" >Quote</text>
<text x="179.00" y="528.70" font-size="8.55" textLength="44.00" lengthAdjust="spacingAndGlyphs" fill="#606060" font-weight="normal" >Negotiation/</text>
<text x="179.00" y="539.00" font-size="8.55" textLength="25.00" lengthAdjust="spacingAndGlyphs" fill="#606060" font-weight="normal" >Review</text>
<text x="250.75" y="558.20" font-size="8.55" textLength="21.50" lengthAdjust="spacingAndGlyphs" fill="#555" font-weight="normal" >Oct 11</text>
<text x="294.75" y="558.20" font-size="8.55" textLength="21.50" lengthAdjust="spacingAndGlyphs" fill="#555" font-weight="normal" >Oct 16</text>
<text x="351.25" y="558.20" font-size="8.55" textLength="21.50" lengthAdjust="spacingAndGlyphs" fill="#555" font-weight="normal" >Oct 21</text>
<text x="408.55" y="558.20" font-size="8.55" textLength="21.50" lengthAdjust="spacingAndGlyphs" fill="#555" font-weight="normal" >Oct 26</text>
<text x="465.05" y="558.20" font-size="8.55" textLength="21.50" lengthAdjust="spacingAndGlyphs" fill="#555" font-weight="normal" >Oct 31</text>
<rect x="502.30" y="229.00" width="489.50" height="15.00" fill="#f1f1f2" />
<text x="508.70" y="240.30" font-size="9.57" textLength="244.80" lengthAdjust="spacingAndGlyphs" fill="#222" font-weight="normal" >Number of Open Opportunities and Average Days in Stage</text>
<path d="M781.4 232.8 L782.5 235.7 L785.5 235.8 L783.1 237.7 L784 240.6 L781.4 238.9 L778.8 240.6 L779.7 237.7 L777.3 235.8 L780.3 235.7 Z" fill="#3468c4"/>
<text x="788.90" y="240.30" font-size="9.13" textLength="75.40" lengthAdjust="spacingAndGlyphs" fill="#3f6fb6" font-weight="normal" >Click a Stage to Filter</text>
<rect x="503.00" y="246.20" width="488.50" height="1.00" fill="#f0f0f0" />
<rect x="503.00" y="260.80" width="488.50" height="1.00" fill="#f0f0f0" />
<rect x="503.00" y="275.40" width="488.50" height="1.00" fill="#f0f0f0" />
<rect x="503.00" y="290.00" width="488.50" height="1.00" fill="#f0f0f0" />
<rect x="503.00" y="304.60" width="488.50" height="1.00" fill="#f0f0f0" />
<rect x="503.00" y="319.00" width="488.50" height="1.00" fill="#f0f0f0" />
<rect x="503.00" y="333.40" width="488.50" height="1.00" fill="#f0f0f0" />
<rect x="503.00" y="347.90" width="488.50" height="1.00" fill="#f0f0f0" />
<rect x="503.00" y="362.20" width="488.50" height="1.00" fill="#f0f0f0" />
<rect x="611.00" y="248.20" width="177.01" height="11.00" fill="#79bcd4" />
<rect x="800.70" y="248.20" width="177.10" height="11.00" fill="#c4c4c4" />
<text x="533.30" y="256.50" font-size="8.55" textLength="45.00" lengthAdjust="spacingAndGlyphs" fill="#555" font-weight="normal" >Qualification</text>
<rect x="611.00" y="262.80" width="159.88" height="11.00" fill="#8bccd2" />
<rect x="800.70" y="262.80" width="180.40" height="11.00" fill="#c4c4c4" />
<text x="535.55" y="271.10" font-size="8.55" textLength="40.50" lengthAdjust="spacingAndGlyphs" fill="#555" font-weight="normal" >Prospecting</text>
<rect x="611.00" y="277.40" width="154.17" height="11.00" fill="#83c8ac" />
<rect x="800.70" y="277.40" width="171.30" height="11.00" fill="#c4c4c4" />
<text x="524.80" y="285.70" font-size="8.55" textLength="62.00" lengthAdjust="spacingAndGlyphs" fill="#555" font-weight="normal" >Value Proposition</text>
<rect x="611.00" y="292.00" width="142.75" height="11.00" fill="#87c296" />
<rect x="800.70" y="292.00" width="171.30" height="11.00" fill="#c4c4c4" />
<text x="531.05" y="300.30" font-size="8.55" textLength="49.50" lengthAdjust="spacingAndGlyphs" fill="#555" font-weight="normal" >Needs Analysis</text>
<rect x="611.00" y="306.60" width="102.78" height="11.00" fill="#c4ce80" />
<rect x="800.70" y="306.60" width="172.20" height="11.00" fill="#c4c4c4" />
<text x="522.05" y="314.90" font-size="8.55" textLength="67.50" lengthAdjust="spacingAndGlyphs" fill="#555" font-weight="normal" >Id. Decision Makers</text>
<rect x="611.00" y="321.00" width="97.07" height="11.00" fill="#e4d280" />
<rect x="800.70" y="321.00" width="171.30" height="11.00" fill="#c4c4c4" />
<text x="521.55" y="329.30" font-size="8.55" textLength="68.50" lengthAdjust="spacingAndGlyphs" fill="#555" font-weight="normal" >Perception Analysis</text>
<rect x="611.00" y="335.40" width="57.10" height="11.00" fill="#f5cd7e" />
<rect x="800.70" y="335.40" width="171.30" height="11.00" fill="#c4c4c4" />
<text x="519.30" y="343.70" font-size="8.55" textLength="73.00" lengthAdjust="spacingAndGlyphs" fill="#555" font-weight="normal" >Proposal/Price Quote</text>
<rect x="611.00" y="349.90" width="17.13" height="11.00" fill="#f0b478" />
<rect x="800.70" y="349.90" width="171.30" height="11.00" fill="#c4c4c4" />
<text x="520.30" y="358.20" font-size="8.55" textLength="71.00" lengthAdjust="spacingAndGlyphs" fill="#555" font-weight="normal" >Negotiation/ Review</text>
<text x="611.40" y="375.90" font-size="8.55" textLength="4.00" lengthAdjust="spacingAndGlyphs" fill="#555" font-weight="normal" >0</text>
<rect x="610.50" y="363.00" width="0.80" height="3.50" fill="#dcdcdc" />
<text x="663.85" y="375.90" font-size="8.55" textLength="8.50" lengthAdjust="spacingAndGlyphs" fill="#555" font-weight="normal" >10</text>
<rect x="667.60" y="363.00" width="0.80" height="3.50" fill="#dcdcdc" />
<text x="720.85" y="375.90" font-size="8.55" textLength="8.50" lengthAdjust="spacingAndGlyphs" fill="#555" font-weight="normal" >20</text>
<rect x="724.60" y="363.00" width="0.80" height="3.50" fill="#dcdcdc" />
<text x="778.75" y="375.90" font-size="8.55" textLength="8.50" lengthAdjust="spacingAndGlyphs" fill="#555" font-weight="normal" >30</text>
<rect x="782.50" y="363.00" width="0.80" height="3.50" fill="#dcdcdc" />
<text x="801.00" y="375.90" font-size="8.55" textLength="4.00" lengthAdjust="spacingAndGlyphs" fill="#555" font-weight="normal" >0</text>
<rect x="800.10" y="363.00" width="0.80" height="3.50" fill="#dcdcdc" />
<text x="846.05" y="375.90" font-size="8.55" textLength="8.50" lengthAdjust="spacingAndGlyphs" fill="#555" font-weight="normal" >20</text>
<rect x="849.80" y="363.00" width="0.80" height="3.50" fill="#dcdcdc" />
<text x="893.75" y="375.90" font-size="8.55" textLength="8.50" lengthAdjust="spacingAndGlyphs" fill="#555" font-weight="normal" >40</text>
<rect x="897.50" y="363.00" width="0.80" height="3.50" fill="#dcdcdc" />
<text x="943.05" y="375.90" font-size="8.55" textLength="8.50" lengthAdjust="spacingAndGlyphs" fill="#555" font-weight="normal" >60</text>
<rect x="946.80" y="363.00" width="0.80" height="3.50" fill="#dcdcdc" />
<text x="680.60" y="389.70" font-size="8.55" textLength="48.70" lengthAdjust="spacingAndGlyphs" fill="#555" font-weight="normal" >Opportunities</text>
<path d="M735 384.5 H742 M735 387 H740.5 M735 389.5 H738" stroke="#444" stroke-width="1"/>
<text x="871.00" y="389.60" font-size="8.55" textLength="46.80" lengthAdjust="spacingAndGlyphs" fill="#555" font-weight="normal" >Days in Stage</text>
<rect x="502.00" y="400.00" width="489.50" height="15.00" fill="#f1f1f2" />
<text x="508.50" y="411.00" font-size="9.71" textLength="89.10" lengthAdjust="spacingAndGlyphs" fill="#222" font-weight="normal" >Top 10 Opportunities</text>
<rect x="602.50" y="405.00" width="1.10" height="7.00" fill="#8a8a8a" />
<text x="606.50" y="411.20" font-size="7.97" textLength="73.00" lengthAdjust="spacingAndGlyphs" fill="#222" font-weight="normal" >by Expected Amount</text>
<rect x="503.00" y="417.00" width="488.50" height="1.00" fill="#e9e9e9" />
<rect x="503.00" y="431.80" width="488.50" height="1.00" fill="#e9e9e9" />
<rect x="503.00" y="446.50" width="488.50" height="1.00" fill="#e9e9e9" />
<rect x="503.00" y="461.30" width="488.50" height="1.00" fill="#e9e9e9" />
<rect x="503.00" y="476.00" width="488.50" height="1.00" fill="#e9e9e9" />
<rect x="503.00" y="490.80" width="488.50" height="1.00" fill="#e9e9e9" />
<rect x="503.00" y="505.50" width="488.50" height="1.00" fill="#e9e9e9" />
<rect x="503.00" y="520.30" width="488.50" height="1.00" fill="#e9e9e9" />
<rect x="503.00" y="535.00" width="488.50" height="1.00" fill="#e9e9e9" />
<rect x="503.00" y="549.80" width="488.50" height="1.00" fill="#e9e9e9" />
<rect x="503.00" y="564.50" width="488.50" height="1.00" fill="#e9e9e9" />
<rect x="772.00" y="418.00" width="106.20" height="13.80" fill="#f3c878" />
<text x="506.70" y="427.10" font-size="8.70" textLength="98.60" lengthAdjust="spacingAndGlyphs" fill="#484848" font-weight="normal" >Id Sapien Cras Corporation 5</text>
<text x="809.70" y="427.50" font-size="8.12" textLength="28.60" lengthAdjust="spacingAndGlyphs" fill="#444" font-weight="normal" >$75,000</text>
<rect x="772.00" y="432.80" width="106.20" height="13.70" fill="#c1c97f" />
<text x="506.70" y="441.90" font-size="8.70" textLength="85.00" lengthAdjust="spacingAndGlyphs" fill="#484848" font-weight="normal" >Sagittis Felis Donec PC 8</text>
<text x="809.70" y="442.30" font-size="8.12" textLength="28.60" lengthAdjust="spacingAndGlyphs" fill="#444" font-weight="normal" >$72,000</text>
<rect x="772.00" y="447.50" width="106.20" height="13.80" fill="#e6cf80" />
<text x="506.70" y="456.60" font-size="8.70" textLength="32.00" lengthAdjust="spacingAndGlyphs" fill="#484848" font-weight="normal" >Mi Ltd 13</text>
<text x="809.70" y="457.00" font-size="8.12" textLength="28.60" lengthAdjust="spacingAndGlyphs" fill="#444" font-weight="normal" >$28,000</text>
<rect x="772.00" y="462.30" width="106.20" height="13.70" fill="#7cc6ab" />
<text x="506.70" y="471.40" font-size="8.70" textLength="143.70" lengthAdjust="spacingAndGlyphs" fill="#484848" font-weight="normal" >Inceptos Hymenaeos Mauris Associates 4</text>
<text x="809.70" y="471.80" font-size="8.12" textLength="28.60" lengthAdjust="spacingAndGlyphs" fill="#444" font-weight="normal" >$15,000</text>
<rect x="772.00" y="477.00" width="106.20" height="13.80" fill="#a3d0ae" />
<text x="506.70" y="486.10" font-size="8.70" textLength="71.70" lengthAdjust="spacingAndGlyphs" fill="#484848" font-weight="normal" >Nec Tempus Corp. 13</text>
<text x="809.70" y="486.50" font-size="8.12" textLength="28.60" lengthAdjust="spacingAndGlyphs" fill="#444" font-weight="normal" >$10,000</text>
<rect x="772.00" y="491.80" width="106.20" height="13.70" fill="#72bcd5" />
<text x="506.70" y="500.90" font-size="8.70" textLength="65.00" lengthAdjust="spacingAndGlyphs" fill="#484848" font-weight="normal" >Ligula Aenean PC 2</text>
<text x="811.65" y="501.30" font-size="8.12" textLength="24.70" lengthAdjust="spacingAndGlyphs" fill="#444" font-weight="normal" >$4,000</text>
<rect x="772.00" y="506.50" width="106.20" height="13.80" fill="#90cddf" />
<text x="506.70" y="515.60" font-size="8.70" textLength="84.20" lengthAdjust="spacingAndGlyphs" fill="#484848" font-weight="normal" >Et Netus Corporation 10</text>
<text x="811.65" y="516.00" font-size="8.12" textLength="24.70" lengthAdjust="spacingAndGlyphs" fill="#444" font-weight="normal" >$3,500</text>
<rect x="772.00" y="521.30" width="106.20" height="13.70" fill="#ecd68f" />
<text x="506.70" y="530.40" font-size="8.70" textLength="73.30" lengthAdjust="spacingAndGlyphs" fill="#484848" font-weight="normal" >Donec Foundation 13</text>
<text x="811.65" y="530.80" font-size="8.12" textLength="24.70" lengthAdjust="spacingAndGlyphs" fill="#444" font-weight="normal" >$3,500</text>
<rect x="772.00" y="536.00" width="106.20" height="13.80" fill="#90cfdc" />
<text x="506.70" y="545.10" font-size="8.70" textLength="133.30" lengthAdjust="spacingAndGlyphs" fill="#484848" font-weight="normal" >Mauris Molestie Pharetra Company 15</text>
<text x="811.65" y="545.50" font-size="8.12" textLength="24.70" lengthAdjust="spacingAndGlyphs" fill="#444" font-weight="normal" >$3,000</text>
<rect x="772.00" y="550.80" width="106.20" height="13.70" fill="#9ad3de" />
<text x="506.70" y="559.90" font-size="8.70" textLength="43.20" lengthAdjust="spacingAndGlyphs" fill="#484848" font-weight="normal" >Nunc Corp. 8</text>
<text x="811.65" y="560.30" font-size="8.12" textLength="24.70" lengthAdjust="spacingAndGlyphs" fill="#444" font-weight="normal" >$2,000</text>
<rect x="0.00" y="573.00" width="1000.00" height="2.00" fill="#f6f6f6" />
</svg></body></html>
